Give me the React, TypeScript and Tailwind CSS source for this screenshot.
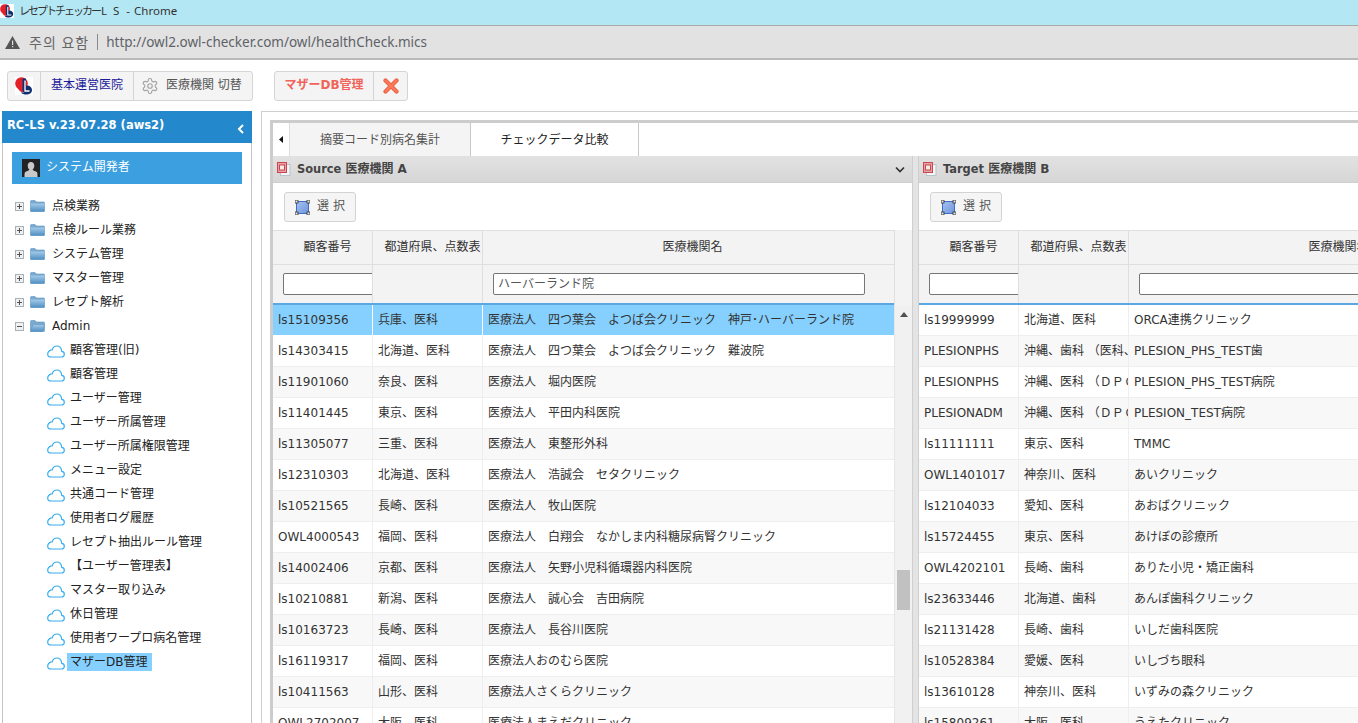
import React from "react";

const FONT = "[font-family:'DejaVu_Sans','Noto_Sans_CJK_JP',sans-serif]";

function Logo({ s = 14 }: { s?: number }) {
  return (
    <svg width={s} height={s} viewBox="0 0 18 18" className="shrink-0">
      <rect width="18" height="18" fill="#fff" />
      <circle cx="6.500" cy="6.500" r="6.300" fill="#e3202a" />
      <path d="M3 11.500C4 14 6 15 8 15.500L8 10z" fill="#e3202a" />
      <path d="M7.500 1.500H11V8.500C14 8 17 10 17 13 17 16 14.500 17.500 11.500 17.500 9 17.500 7 17 6 15.500H9C8 15 7.500 14 7.500 12.500z" fill="#12306e" />
      <path d="M10 3.500V14H14.500" fill="none" stroke="#fff" strokeWidth="1.300" />
    </svg>
  );
}

function PlusBox({ minus }: { minus?: boolean }) {
  return (
    <svg width="9" height="9" viewBox="0 0 9 9" className="shrink-0">
      <rect x="0.500" y="0.500" width="8" height="8" fill="#eef0f2" stroke="#a9b0b6" />
      <path d="M2 4.500h5" stroke="#555" />
      {!minus && <path d="M4.500 2v5" stroke="#555" />}
    </svg>
  );
}

function Folder({ open }: { open?: boolean }) {
  return (
    <svg width="15" height="12" viewBox="0 0 15 12" className="shrink-0">
      <defs>
        <linearGradient id="fd" x1="0" y1="0" x2="0" y2="1">
          <stop offset="0" stopColor="#a5cbe8" />
          <stop offset="1" stopColor="#4f8fc4" />
        </linearGradient>
      </defs>
      <path d="M0.500 1.500c0-.6.4-1 1-1h3.500l1.500 1.500h7c.6 0 1 .4 1 1V11c0 .3-.2.500-.5.500H1c-.3 0-.5-.2-.5-.5z" fill="#7aa9cf" stroke="#5c93c0" strokeWidth="0.600" />
      {open ? (
        <path d="M0.500 11.500 3 4.500h11.500L12.500 11.500z" fill="url(#fd)" stroke="#5c93c0" strokeWidth="0.500" />
      ) : (
        <path d="M0.500 3.500h14V11c0 .3-.2.500-.5.500H1c-.3 0-.5-.2-.5-.5z" fill="url(#fd)" />
      )}
    </svg>
  );
}

function Cloud() {
  return (
    <svg width="18" height="13" viewBox="0 0 18 13" className="shrink-0">
      <path d="M4 12H14.300C16 12 17.300 10.800 17.300 9.200 17.300 7.700 16.200 6.600 14.800 6.400 14.400 3.200 12.300 1 9.800 1 7.600 1 5.900 2.600 5.200 4.800 4.900 4.700 4.600 4.700 4.300 4.900 2.200 5.600 0.700 7.200 0.700 9.200 0.700 10.800 2.100 12 4 12Z" fill="#fff" stroke="#38aef0" strokeWidth="1.200" />
    </svg>
  );
}

function Gear() {
  return (
    <svg width="18" height="18" viewBox="0 0 24 24" fill="none" stroke="#a5a5a5" strokeWidth="1.600" className="shrink-0">
      <path d="M12.220 2h-.44a2 2 0 0 0-2 2v.18a2 2 0 0 1-1 1.730l-.43.25a2 2 0 0 1-2 0l-.15-.08a2 2 0 0 0-2.730.73l-.22.38a2 2 0 0 0 .73 2.730l.15.1a2 2 0 0 1 1 1.720v.51a2 2 0 0 1-1 1.740l-.15.09a2 2 0 0 0-.73 2.730l.22.38a2 2 0 0 0 2.730.73l.15-.08a2 2 0 0 1 2 0l.43.25a2 2 0 0 1 1 1.730V20a2 2 0 0 0 2 2h.44a2 2 0 0 0 2-2v-.18a2 2 0 0 1 1-1.730l.43-.25a2 2 0 0 1 2 0l.15.08a2 2 0 0 0 2.730-.73l.22-.39a2 2 0 0 0-.73-2.730l-.15-.08a2 2 0 0 1-1-1.740v-.5a2 2 0 0 1 1-1.740l.15-.09a2 2 0 0 0 .73-2.730l-.22-.38a2 2 0 0 0-2.730-.73l-.15.08a2 2 0 0 1-2 0l-.43-.25a2 2 0 0 1-1-1.730V4a2 2 0 0 0-2-2z" />
      <circle cx="12" cy="12" r="3" />
    </svg>
  );
}

function RedX() {
  return (
    <svg width="16" height="16" viewBox="0 0 16 16" className="shrink-0">
      <path d="M2.500 2.500 13.500 13.500M13.500 2.500 2.500 13.500" stroke="#e8603f" strokeWidth="4.200" strokeLinecap="round" />
      <path d="M2.500 2.500 13.500 13.500M13.500 2.500 2.500 13.500" stroke="#fb7a5c" strokeWidth="2.400" strokeLinecap="round" />
    </svg>
  );
}

function DocIcon() {
  return (
    <svg width="14" height="14" viewBox="0 0 14 14" className="shrink-0">
      <rect x="3.500" y="2.500" width="9.500" height="11" fill="#f2f6f6" stroke="#b9c3c9" />
      <rect x="0.500" y="0.500" width="9" height="10" fill="#e9a0a4" stroke="#c9484f" />
      <rect x="2.500" y="3" width="5" height="5" fill="#fbeaea" stroke="#c9484f" />
    </svg>
  );
}

function SelectIcon() {
  return (
    <svg width="15" height="15" viewBox="0 0 15 15" className="shrink-0">
      <defs>
        <linearGradient id="sl" x1="0" y1="0" x2="1" y2="1">
          <stop offset="0" stopColor="#a9c3ee" />
          <stop offset="1" stopColor="#6d93dc" />
        </linearGradient>
      </defs>
      <rect x="1.500" y="1.500" width="12" height="12" fill="url(#sl)" stroke="#3f6cc4" />
      <rect x="0" y="0" width="3" height="3" fill="#ddd" stroke="#333" strokeWidth="0.800" />
      <rect x="12" y="0" width="3" height="3" fill="#ddd" stroke="#333" strokeWidth="0.800" />
      <rect x="0" y="12" width="3" height="3" fill="#ddd" stroke="#333" strokeWidth="0.800" />
      <rect x="12" y="12" width="3" height="3" fill="#ddd" stroke="#333" strokeWidth="0.800" />
    </svg>
  );
}

const folders: [string, boolean][] = [
  ["点検業務", false],
  ["点検ルール業務", false],
  ["システム管理", false],
  ["マスター管理", false],
  ["レセプト解析", false],
  ["Admin", true],
];

const children = [
  "顧客管理(旧)",
  "顧客管理",
  "ユーザー管理",
  "ユーザー所属管理",
  "ユーザー所属権限管理",
  "メニュー設定",
  "共通コード管理",
  "使用者ログ履歴",
  "レセプト抽出ルール管理",
  "【ユーザー管理表】",
  "マスター取り込み",
  "休日管理",
  "使用者ワープロ病名管理",
  "マザーDB管理",
];

const leftRows = [
  ["ls15109356", "兵庫、医科", "医療法人　四つ葉会　よつば会クリニック　神戸･ハーバーランド院"],
  ["ls14303415", "北海道、医科", "医療法人　四つ葉会　よつば会クリニック　難波院"],
  ["ls11901060", "奈良、医科", "医療法人　堀内医院"],
  ["ls11401445", "東京、医科", "医療法人　平田内科医院"],
  ["ls11305077", "三重、医科", "医療法人　東整形外科"],
  ["ls12310303", "北海道、医科", "医療法人　浩誠会　セタクリニック"],
  ["ls10521565", "長崎、医科", "医療法人　牧山医院"],
  ["OWL4000543", "福岡、医科", "医療法人　白翔会　なかしま内科糖尿病腎クリニック"],
  ["ls14002406", "京都、医科", "医療法人　矢野小児科循環器内科医院"],
  ["ls10210881", "新潟、医科", "医療法人　誠心会　吉田病院"],
  ["ls10163723", "長崎、医科", "医療法人　長谷川医院"],
  ["ls16119317", "福岡、医科", "医療法人おのむら医院"],
  ["ls10411563", "山形、医科", "医療法人さくらクリニック"],
  ["OWL2702007", "大阪、医科", "医療法人まえだクリニック"],
];

const rightRows = [
  ["ls19999999", "北海道、医科", "ORCA連携クリニック"],
  ["PLESIONPHS", "沖縄、歯科 （医科、歯科）", "PLESION_PHS_TEST歯"],
  ["PLESIONPHS", "沖縄、医科 （ＤＰＣ）", "PLESION_PHS_TEST病院"],
  ["PLESIONADM", "沖縄、医科 （ＤＰＣ）", "PLESION_TEST病院"],
  ["ls11111111", "東京、医科", "TMMC"],
  ["OWL1401017", "神奈川、医科", "あいクリニック"],
  ["ls12104033", "愛知、医科", "あおばクリニック"],
  ["ls15724455", "東京、医科", "あけぼの診療所"],
  ["OWL4202101", "長崎、歯科", "ありた小児・矯正歯科"],
  ["ls23633446", "北海道、歯科", "あんぽ歯科クリニック"],
  ["ls21131428", "長崎、歯科", "いしだ歯科医院"],
  ["ls10528384", "愛媛、医科", "いしづち眼科"],
  ["ls13610128", "神奈川、医科", "いずみの森クリニック"],
  ["ls15809261", "大阪、医科", "うえたクリニック"],
];

function Panel({
  latin,
  rest,
  rows,
  filter,
  selected,
  left,
}: {
  latin: string;
  rest: string;
  rows: string[][];
  filter?: string;
  selected?: boolean;
  left?: boolean;
}) {
  const cols = "grid-cols-[100px_110px_411px]";
  return (
    <div className={left ? "w-[639px] shrink-0 flex flex-col h-full" : "flex-1 min-w-0 flex flex-col h-full"}>
      <div className="h-[27px] shrink-0 flex items-center pl-[4px] pr-[7px] gap-[6px] bg-gradient-to-b from-[#e2e2e2] to-[#d6d6d6] border-b border-[#cfcfcf]">
        <DocIcon />
        <span className="font-bold text-[12px] text-[#444] whitespace-pre">
          <span className="text-[11.4px]">{latin}</span> {rest}
        </span>
        {left && (
          <svg width="10" height="7" viewBox="0 0 10 7" className="ml-auto">
            <path d="M1 1.500 5 5.500 9 1.500" fill="none" stroke="#333" strokeWidth="1.700" />
          </svg>
        )}
      </div>
      <div className="h-[47px] shrink-0 flex items-center pl-[11px] pt-[1px] bg-white">
        <button className="h-[30px] w-[72px] flex items-center justify-center gap-[7px] bg-[#f5f5f5] border border-[#d3d3d3] rounded-[3px] text-[12px] text-[#555]">
          <SelectIcon />
          <span className="mb-[2px]">選 択</span>
        </button>
      </div>
      <div className="flex flex-1 min-h-0">
        <div className="flex-1 min-w-0 overflow-hidden flex flex-col">
          <div className={`grid ${cols} h-[35px] shrink-0 bg-[#f3f3f3] border-t border-b border-[#dfdfdf] text-[12px] text-[#333]`}>
            <div className="flex items-center justify-center pl-[10px] pb-[2px] border-r border-[#dfdfdf]">顧客番号</div>
            <div className="flex items-center justify-center pl-[10px] pb-[2px] border-r border-[#dfdfdf] whitespace-nowrap">都道府県、点数表</div>
            <div className="flex items-center justify-center pl-[8px] pb-[2px] whitespace-nowrap">医療機関名</div>
          </div>
          <div className={`grid ${cols} h-[38px] shrink-0 bg-[#f3f3f3] text-[12px]`}>
            <div className="border-r border-[#dfdfdf] pl-[10px] pt-[8px] overflow-hidden">
              <div className="h-[22px] w-[100px] bg-white border border-[#767676] rounded-[2px]" />
            </div>
            <div className="border-r border-[#dfdfdf]" />
            <div className="pl-[10px] pt-[8px]">
              <div className="h-[22px] w-[372px] bg-white border border-[#767676] rounded-[2px] pl-[4px] flex items-center text-[#555] whitespace-nowrap">{filter}</div>
            </div>
          </div>
          <div className="h-[2px] shrink-0 bg-[#5aa7e2]" />
          {rows.map((r, i) => {
            const sel = selected && i === 0;
            const gray = left ? i % 2 === 0 : i % 2 === 1;
            const bg = sel ? "bg-[#85d0ff]" : gray ? "bg-[#f8f8f8]" : "bg-white";
            return (
              <div key={i} className={`grid ${cols} h-[31px] shrink-0 ${bg} border-b ${sel ? "border-white" : "border-[#eeeeee]"} text-[12px] text-[#333] whitespace-nowrap`}>
                {r.map((c, j) => (
                  <div key={j} className={`flex items-center pl-[5px] overflow-hidden ${j < 2 ? (sel ? "border-r border-white" : "border-r border-[#eeeeee]") : ""}`}>
                    {c}
                  </div>
                ))}
              </div>
            );
          })}
        </div>
        {left && (
          <div className="w-[18px] shrink-0 flex flex-col border-l border-[#e6e6e6]">
            <div className="h-[75px] shrink-0 bg-[#f3f3f3] border-l border-[#dfdfdf] -ml-px" />
            <div className="flex-1 bg-[#f1f1f1] flex flex-col items-center relative">
              <svg width="8" height="5" viewBox="0 0 8 5" className="mt-[7px]">
                <path d="M4 0 8 5H0z" fill="#505050" />
              </svg>
              <div className="absolute top-[265px] left-[2px] w-[13px] h-[40px] bg-[#c1c1c1]" />
            </div>
          </div>
        )}
      </div>
    </div>
  );
}

export default function App() {
  return (
    <div className={`w-[1358px] h-[723px] overflow-hidden flex flex-col bg-white ${FONT}`}>
      {/* window title */}
      <div className="h-[25px] shrink-0 bg-[#b3e7f3] flex items-center pb-[3px] text-[11.5px] text-[#333] whitespace-pre [font-family:'Noto_Sans','Noto_Sans_CJK_JP',sans-serif]">
        <Logo s={14} />
        <span className="ml-[5px] text-[11px] tracking-[-2px]">レセプトチェッカー</span>
        <span className="ml-[1px]">L</span>
        <span className="ml-[6px]">S</span>
        <span className="ml-[7px]">-</span>
        <span className="ml-[4px]">Chrome</span>
      </div>
      {/* address bar */}
      <div className="h-[35px] shrink-0 bg-[#e2e2e2] border-t border-[#aaaaaa] border-b-2 border-b-[#b9b9b9] flex items-center pl-[5px] text-[#666] [font-family:'Noto_Sans','Noto_Sans_CJK_KR',sans-serif]">
        <svg width="15" height="13" viewBox="0 0 15 13" className="shrink-0">
          <path d="M7.500 0 15 13H0z" fill="#555" />
          <path d="M7 4.500h1.200v4.500H7zM7 10h1.200v1.300H7z" fill="#e2e2e2" />
        </svg>
        <span className="ml-[9px] text-[14px] tracking-[1px]">주의 요함</span>
        <span className="ml-[8px] h-[16px] border-l border-[#888]" />
        <span className="ml-[8px] text-[13.5px] text-[#5f6368]">http://owl2.owl-checker.com/owl/healthCheck.mics</span>
      </div>
      {/* toolbar */}
      <div className="h-[51px] shrink-0 flex items-start pt-[11px] pl-[7px] text-[12px]">
        <div className="flex h-[30px] w-[246px] bg-[#f4f4f4] border border-[#d5d5d5] rounded-[3px]">
          <div className="w-[33px] flex items-center justify-center border-r border-[#d5d5d5]">
            <Logo s={18} />
          </div>
          <div className="w-[93px] flex items-center justify-center pb-[2px] border-r border-[#d5d5d5] text-[#1a1a9a]">基本運営医院</div>
          <div className="flex-1 flex items-center pl-[7px] gap-[7px] text-[#555] whitespace-nowrap">
            <Gear />
            <span className="mb-[2px]">医療機関 切替</span>
          </div>
        </div>
        <div className="flex h-[30px] ml-[21px] bg-[#f4f4f4] border border-[#d5d5d5] rounded-[3px]">
          <div className="w-[99px] flex items-center justify-center pb-[2px] border-r border-[#d5d5d5] text-[#f0625a] font-bold whitespace-nowrap">マザーDB管理</div>
          <div className="w-[33px] flex items-center justify-center">
            <RedX />
          </div>
        </div>
      </div>
      {/* body */}
      <div className="flex-1 min-h-0 flex pl-[2px]">
        {/* sidebar */}
        <div className="w-[250px] shrink-0 flex flex-col border-x border-[#c4c4c4]">
          <div className="h-[32px] shrink-0 bg-[#2488cc] -mx-px flex items-center pl-[5px] pr-[7px] text-white font-bold text-[11.5px] whitespace-nowrap">
            <span className="mb-[2px]">RC-LS v.23.07.28 (aws2)</span>
            <svg width="8" height="10" viewBox="0 0 8 10" className="ml-auto mt-[3px]">
              <path d="M6 1 2 5l4 4" fill="none" stroke="#fff" strokeWidth="2" />
            </svg>
          </div>
          <div className="mx-[9px] mt-[9px] h-[32px] shrink-0 bg-[#3c9fe0] flex items-center pl-[10px] gap-[6px] text-white text-[12px]">
            <svg width="18" height="18" viewBox="0 0 18 18" className="shrink-0">
              <rect width="18" height="18" fill="#222" />
              <path d="M9 3c2 0 3.300 1.500 3.300 3.800 0 1.800-.9 3.300-1.800 4 .3.800 3.500 1.500 4.500 2.500.5.600.5 3 .5 4.700H2.500c0-1.700 0-4.100.5-4.700 1-1 4.200-1.700 4.500-2.500-.9-.7-1.800-2.200-1.800-4C5.700 4.500 7 3 9 3z" fill="#c9c9c9" />
            </svg>
            <span className="mb-[2px]">システム開発者</span>
          </div>
          <div className="pt-[10px] text-[12px] text-[#222]">
            {folders.map(([name, open]) => (
              <div key={name} className="h-[24px] flex items-center pl-[12px]">
                <PlusBox minus={open} />
                <span className="ml-[6px]">
                  <Folder open={open} />
                </span>
                <span className="ml-[7px]">{name}</span>
              </div>
            ))}
            {children.map((name, i) => {
              const active = i === children.length - 1;
              return (
                <div key={name} className="h-[24px] flex items-center pl-[44px]">
                  <span className="mt-[3px]">
                    <Cloud />
                  </span>
                  <span className={`ml-[2px] h-[18px] flex items-center pl-[3px] pr-[5px] whitespace-nowrap ${active ? "bg-[#85d0ff]" : ""}`}>{name}</span>
                </div>
              );
            })}
          </div>
        </div>
        {/* main */}
        <div className="flex-1 min-w-0 ml-[9px] border-l border-t border-[#cfcfcf] pl-[8px] pt-[8px] flex flex-col">
          <div className="flex-1 min-h-0 flex flex-col border-l-[3px] border-t-[3px] border-[#cccccc]">
            <div className="h-[33px] shrink-0 flex text-[12px] bg-white">
              <div className="w-[17px] flex items-center justify-center bg-white border-r border-[#dcdcdc]">
                <svg width="4" height="7" viewBox="0 0 4 7">
                  <path d="M4 0v7L0 3.500z" fill="#111" />
                </svg>
              </div>
              <div className="w-[181px] flex items-center justify-center bg-[#f4f4f4] border-r border-[#c8c8c8] text-[#555]">摘要コード別病名集計</div>
              <div className="w-[168px] flex items-center justify-center border-r border-[#c8c8c8] text-[#222]">チェックデータ比較</div>
            </div>
            <div className="flex-1 min-h-0 flex overflow-hidden">
              <Panel left selected latin="Source" rest="医療機関 A" rows={leftRows} filter="ハーバーランド院" />
              <div className="w-[7px] shrink-0 bg-[#e4e4e4] border-x border-[#cfcfcf]" />
              <Panel latin="Target" rest="医療機関 B" rows={rightRows} />
            </div>
          </div>
        </div>
      </div>
    </div>
  );
}
